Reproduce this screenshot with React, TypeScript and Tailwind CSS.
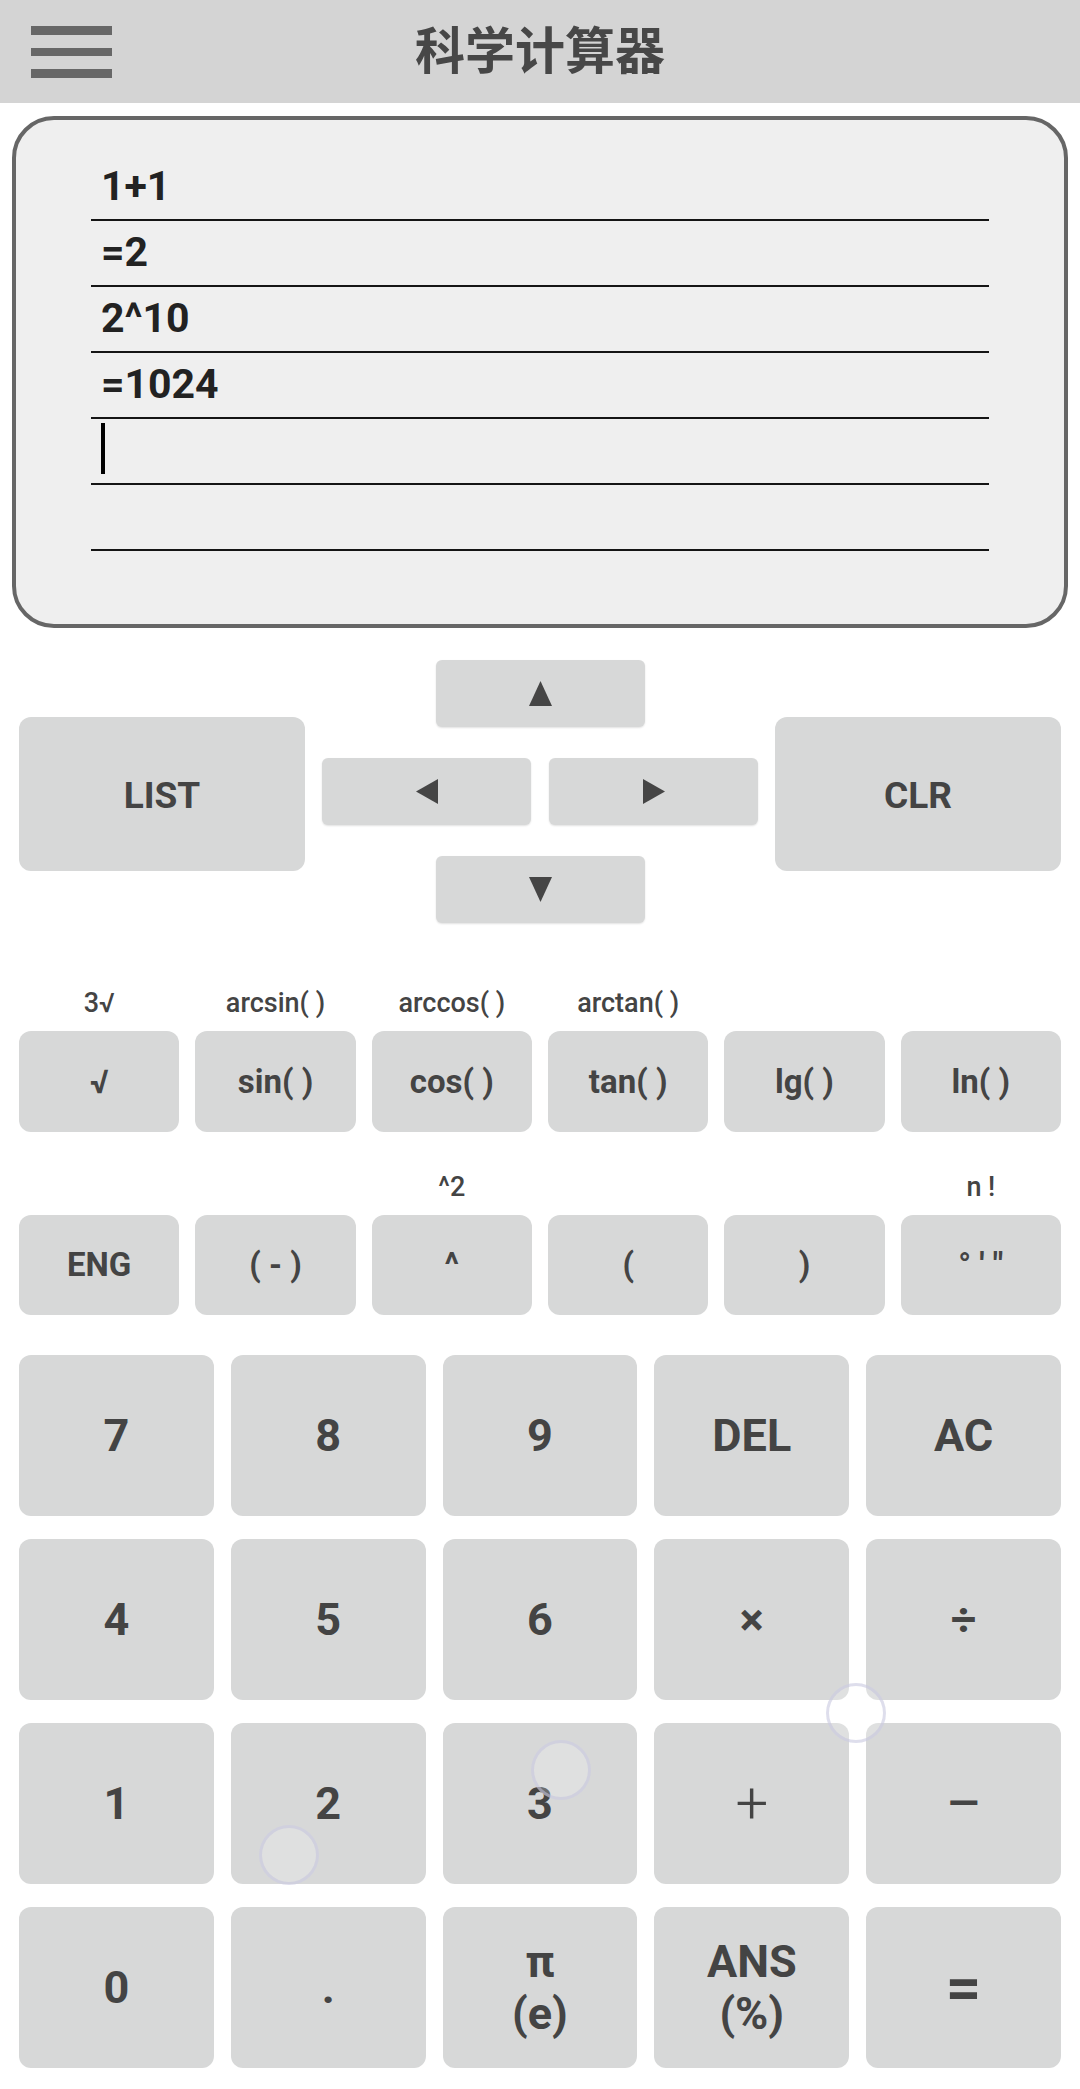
import React from 'react';

const FUNC_LABELS_1 = ['3√', 'arcsin( )', 'arccos( )', 'arctan( )', '', ''];
const FUNC_KEYS_1 = ['√', 'sin( )', 'cos( )', 'tan( )', 'lg( )', 'ln( )'];
const FUNC_LABELS_2 = ['', '', '^2', '', '', 'n !'];
const FUNC_KEYS_2 = ['ENG', '( - )', '^', '(', ')', '° \u2032 \u2033'];

const NUM_KEYS: { top: string; bottom?: string; cls?: string }[] = [
  { top: '7' }, { top: '8' }, { top: '9' }, { top: 'DEL' }, { top: 'AC' },
  { top: '4' }, { top: '5' }, { top: '6' }, { top: '×' }, { top: '÷' },
  { top: '1' }, { top: '2' }, { top: '3' }, { top: '+', cls: 'text-[58px] font-light' }, { top: '—', cls: 'text-[40px]' },
  { top: '0' }, { top: '.' }, { top: 'π', bottom: '(e)' }, { top: 'ANS', bottom: '(%)' }, { top: '=', cls: 'text-[62px]' },
];

const HISTORY = ['1+1', '=2', '2^10', '=1024'];

function Triangle({ dir }: { dir: 'up' | 'down' | 'left' | 'right' }) {
  if (dir === 'up') {
    return (
      <svg width="23" height="25" viewBox="0 0 23 25">
        <polygon points="11.5,0 23,25 0,25" fill="#454545" />
      </svg>
    );
  }
  if (dir === 'down') {
    return (
      <svg width="23" height="25" viewBox="0 0 23 25">
        <polygon points="0,0 23,0 11.5,25" fill="#454545" />
      </svg>
    );
  }
  if (dir === 'left') {
    return (
      <svg width="22" height="25" viewBox="0 0 22 25">
        <polygon points="0,12.5 22,0 22,25" fill="#454545" />
      </svg>
    );
  }
  return (
    <svg width="22" height="25" viewBox="0 0 22 25">
      <polygon points="0,0 22,12.5 0,25" fill="#454545" />
    </svg>
  );
}

function NavKey({ dir }: { dir: 'up' | 'down' | 'left' | 'right' }) {
  return (
    <button className="w-[209px] h-[67px] rounded-[6px] bg-[#d7d8d8] shadow-[0_1px_2px_rgba(0,0,0,0.12)] flex items-center justify-center">
      <Triangle dir={dir} />
    </button>
  );
}

// faint touch markers left on the screenshot
function Ripple({ className }: { className: string }) {
  return (
    <div
      className={`absolute w-[60px] h-[60px] rounded-full border-[3px] border-[rgba(195,195,220,0.55)] bg-[rgba(255,255,255,0.22)] ${className}`}
    />
  );
}

export default function App() {
  return (
    <div className="relative w-[1080px] min-h-[2089px] bg-white pb-[22px] font-['Roboto','Noto_Sans_CJK_SC',sans-serif] text-[#444]">
      {/* Header */}
      <header className="h-[103px] bg-[#d4d4d4] grid grid-cols-[1fr_auto_1fr] items-center pl-[31px]">
        <div className="flex flex-col gap-[13px] w-[81px]">
          <span className="block h-[9px] bg-[#676767]" />
          <span className="block h-[8px] bg-[#676767]" />
          <span className="block h-[9px] bg-[#676767]" />
        </div>
        <h1 className="text-[50px] leading-none font-bold text-[#474747] font-['Noto_Sans_CJK_SC',sans-serif] pr-[31px] pb-[10px]">
          科学计算器
        </h1>
        <div />
      </header>

      {/* Display */}
      <div className="mx-[12px] mt-[13px] h-[512px] border-4 border-[#666] rounded-[42px] bg-[#efefef] pt-[35px] px-[75px]">
        {HISTORY.map((line, i) => (
          <div
            key={i}
            className="h-[66px] border-b-2 border-[#151515] pl-[10px] text-[41px] leading-[62px] font-bold text-[#222]"
          >
            {line}
          </div>
        ))}
        <div className="h-[66px] border-b-2 border-[#151515] pl-[10px] pt-[4px]">
          <span className="block w-[4px] h-[51px] bg-black" />
        </div>
        <div className="h-[66px] border-b-2 border-[#151515]" />
      </div>

      {/* Navigation */}
      <div className="mt-[32px] px-[19px] flex items-center justify-between">
        <button className="w-[286px] h-[154px] rounded-[12px] bg-[#d7d8d8] text-[37px] font-bold text-[#444] mt-[5px] pt-[3px]">
          LIST
        </button>
        <div className="w-[436px] flex flex-col items-center gap-[31px]">
          <NavKey dir="up" />
          <div className="flex gap-[18px]">
            <NavKey dir="left" />
            <NavKey dir="right" />
          </div>
          <NavKey dir="down" />
        </div>
        <button className="w-[286px] h-[154px] rounded-[12px] bg-[#d7d8d8] text-[37px] font-bold text-[#444] mt-[5px] pt-[3px]">
          CLR
        </button>
      </div>

      {/* Function keys */}
      <div className="mt-[62px] px-[19px]">
        <div className="grid grid-cols-6 gap-x-[16px] h-[36px]">
          {FUNC_LABELS_1.map((l, i) => (
            <span key={i} className="text-center text-[27px] leading-[36px] font-medium text-[#444]">
              {l}
            </span>
          ))}
        </div>
        <div className="mt-[10px] grid grid-cols-6 gap-x-[16px]">
          {FUNC_KEYS_1.map((k) => (
            <button key={k} className="h-[101px] rounded-[12px] bg-[#d7d8d8] text-[33px] font-bold text-[#444]">
              {k}
            </button>
          ))}
        </div>

        <div className="mt-[37px] grid grid-cols-6 gap-x-[16px] h-[36px]">
          {FUNC_LABELS_2.map((l, i) => (
            <span key={i} className="text-center text-[27px] leading-[36px] font-medium text-[#444]">
              {l}
            </span>
          ))}
        </div>
        <div className="mt-[10px] grid grid-cols-6 gap-x-[16px]">
          {FUNC_KEYS_2.map((k) => (
            <button key={k} className="h-[100px] rounded-[12px] bg-[#d7d8d8] text-[33px] font-bold text-[#444]">
              {k}
            </button>
          ))}
        </div>
      </div>

      {/* Number pad */}
      <div className="mt-[40px] px-[19px] grid grid-cols-5 gap-x-[17px] gap-y-[23px]">
        {NUM_KEYS.map((k) => (
          <button
            key={k.top}
            className={`h-[161px] rounded-[12px] bg-[#d7d8d8] font-bold text-[#444] flex flex-col items-center justify-center leading-[1.15] ${
              k.cls ?? 'text-[45px]'
            }`}
          >
            <span>{k.top}</span>
            {k.bottom && <span>{k.bottom}</span>}
          </button>
        ))}
      </div>

      <Ripple className="left-[259px] top-[1825px]" />
      <Ripple className="left-[531px] top-[1740px]" />
      <Ripple className="left-[826px] top-[1683px]" />
    </div>
  );
}
